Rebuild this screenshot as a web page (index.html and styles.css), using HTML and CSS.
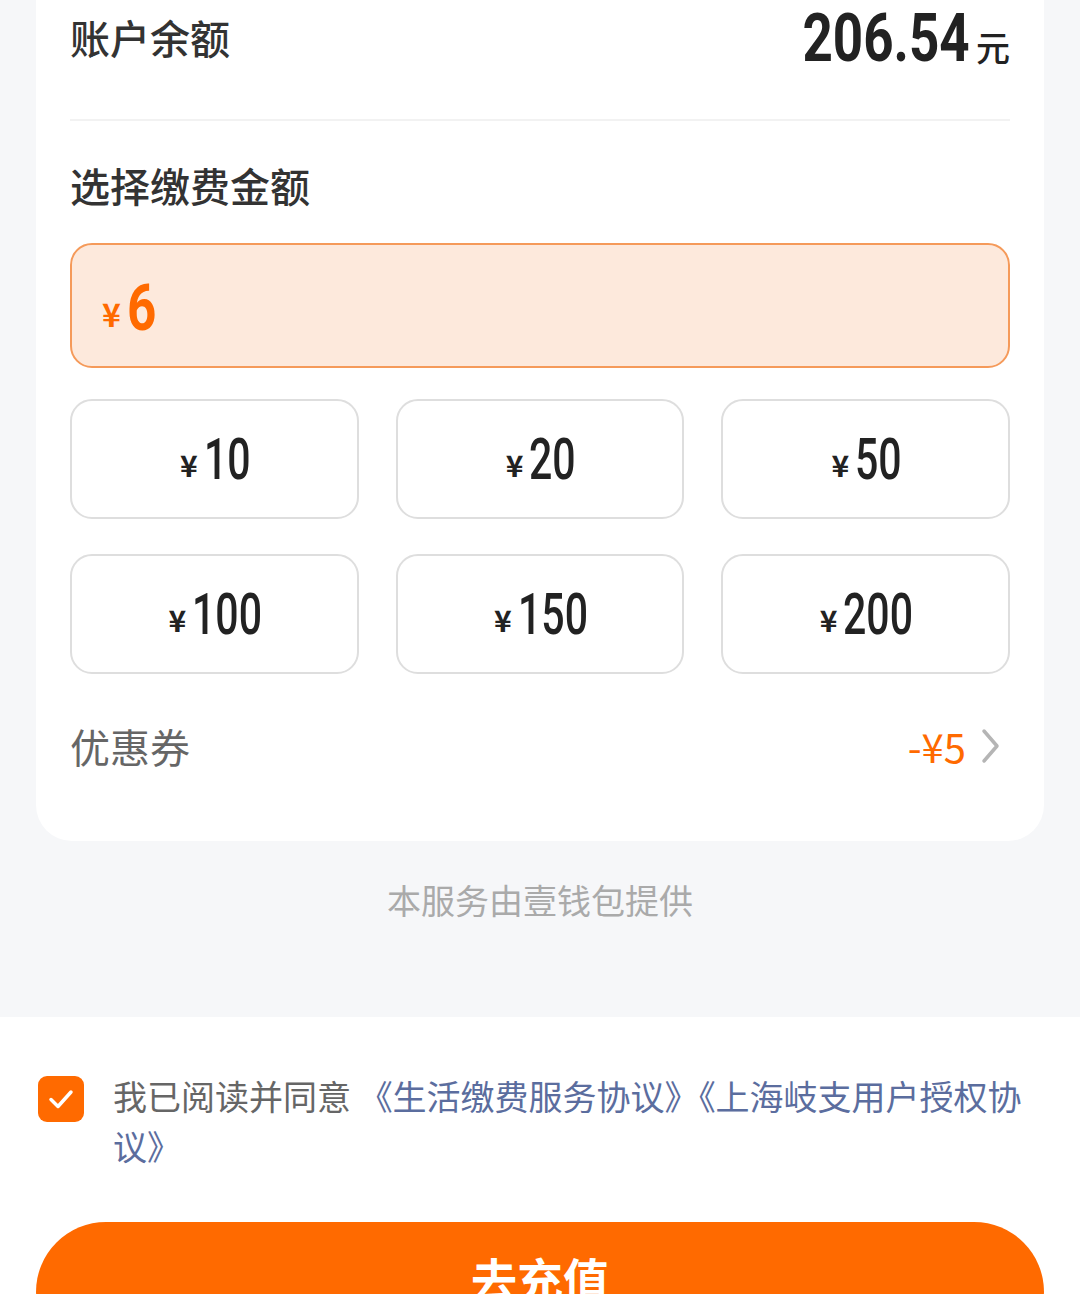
FILE: index.html
```html
<!DOCTYPE html>
<html>
<head>
<meta charset="utf-8">
<title>生活缴费</title>
<link rel="stylesheet" href="styles.css">
</head>
<body>
    <div class="card">
        <div class="balance">
            <span class="label">账户余额</span>
            <span class="amount"><span class="num">206.54</span><em>元</em></span>
        </div>

        <h2 class="title">选择缴费金额</h2>

        <div class="input_box">
            <span class="yen">¥</span><span class="val">6</span>
        </div>

        <ul class="options">
            <li><span class="yen">¥</span><span class="num">10</span></li>
            <li><span class="yen">¥</span><span class="num">20</span></li>
            <li><span class="yen">¥</span><span class="num">50</span></li>
            <li><span class="yen">¥</span><span class="num">100</span></li>
            <li><span class="yen">¥</span><span class="num">150</span></li>
            <li><span class="yen">¥</span><span class="num">200</span></li>
        </ul>

        <div class="coupon">
            <span>优惠券</span>
            <span class="discount">-¥5
                <svg width="22" height="36" viewBox="0 0 22 36"><path d="M4 3 L17 18 L4 33" fill="none" stroke="#b5b5b5" stroke-width="3.5" stroke-linecap="round" stroke-linejoin="round"/></svg>
            </span>
        </div>
    </div>

    <p class="provider">本服务由壹钱包提供</p>

    <div class="bottom">
        <div class="agree">
            <span class="check">
                <svg width="46" height="46" viewBox="0 0 46 46"><path d="M13 23.5 L20 30.5 L33 16" fill="none" stroke="#fff" stroke-width="3.5" stroke-linecap="round" stroke-linejoin="round"/></svg>
            </span>
            <p>我已阅读并同意 <a href="javascript:;">《生活缴费服务协议》</a><a href="javascript:;">《上海岐支用户授权协议》</a></p>
        </div>
        <a href="javascript:;" class="btn">去充值</a>
    </div>
</body>
</html>
```

FILE: styles.css
```css
*{ margin: 0; padding: 0; list-style: none; box-sizing: border-box;}
body{ width: 1080px; background: #f6f7f9; font-family: "Noto Sans CJK SC", "Noto Sans", sans-serif; color: #333;}

.card{ margin: 0 36px; padding: 0 34px 59px; background: #fff; border-radius: 0 0 36px 36px;}

.balance{ display: flex; justify-content: space-between; align-items: center; height: 121px; padding-bottom: 45px; border-bottom: 2px solid #f2f2f2;}
.balance .label{ font-size: 40px; font-weight: 500; color: #333; line-height: 76px;}
.balance .amount{ display: flex; align-items: baseline; line-height: 76px; margin-top: 10px; color: #222;}
.balance .num{ display: inline-block; font-family: Roboto, sans-serif; font-size: 67px; font-weight: bold; transform: scaleX(.79); transform-origin: right center; margin-left: -44px;}
.balance .amount em{ font-style: normal; font-size: 34px; font-weight: 500; margin-left: 6px;}

.title{ margin-top: 39px; font-size: 40px; font-weight: 500; line-height: 50px; color: #333;}

.input_box{ display: flex; align-items: center; height: 125px; margin-top: 33px; padding: 6px 0 0 30px; background: #fde9dc; border: 2px solid #f59a5a; border-radius: 22px; color: #ff6a00;}
.input_box .yen{ font-size: 32px; font-weight: bold; margin-right: 6px; margin-top: 8px;}
.input_box .val{ display: inline-block; font-family: Roboto, sans-serif; font-size: 64px; font-weight: bold; transform: scaleX(.8); transform-origin: left center;}

.options{ display: grid; grid-template-columns: repeat(3, 1fr); column-gap: 37px; row-gap: 35px; margin-top: 31px;}
.options li{ display: flex; justify-content: center; align-items: center; height: 120px; border: 2px solid #dedede; border-radius: 22px; color: #222;}
.options .yen{ font-size: 30px; font-weight: bold; margin-top: 10px; margin-right: 6px;}
.options .num{ display: inline-block; font-family: Roboto, sans-serif; font-size: 57px; font-weight: 500; transform: scaleX(.72); transform-origin: left center; margin-right: -20px;}
.options li:nth-child(n+4) .num{ margin-right: -29px;}

.coupon{ display: flex; justify-content: space-between; align-items: center; height: 72px; margin-top: 36px; font-size: 40px; color: #666;}
.coupon .discount{ display: flex; align-items: center; color: #ff6a00; font-size: 40px;}
.coupon svg{ margin-left: 14px; margin-right: 8px;}

.provider{ height: 176px; padding-top: 34px; text-align: center; font-size: 34px; line-height: 50px; color: #aaa;}

.bottom{ background: #fff; padding: 54px 36px 0;}
.agree{ display: flex; align-items: flex-start; padding-left: 2px; padding-right: 14px;}
.agree .check{ flex: none; width: 46px; height: 46px; margin-top: 5px; background: #ff6a00; border-radius: 9px;}
.agree p{ margin-left: 29px; font-size: 34px; line-height: 50px; color: #666;}
.agree a{ color: #5b6d9e; text-decoration: none;}

.btn{ display: block; height: 140px; margin-top: 51px; background: #ff6a00; border-radius: 70px; text-align: center; line-height: 110px; font-size: 46px; font-weight: bold; color: #fff; text-decoration: none;}
```
